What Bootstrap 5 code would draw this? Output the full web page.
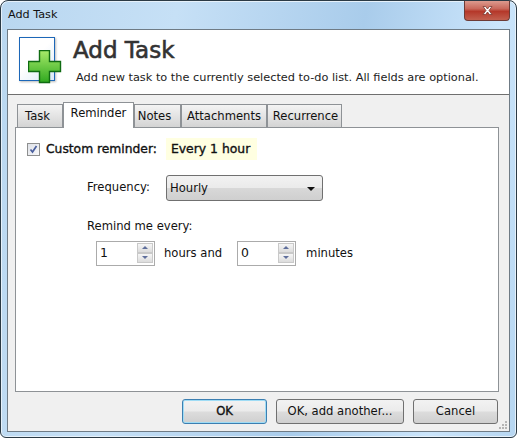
<!DOCTYPE html>
<html lang="en">
<head>
<meta charset="UTF-8">
<title>Add Task</title>
<link href="https://cdn.jsdelivr.net/npm/bootstrap@5.3.2/dist/css/bootstrap.min.css" rel="stylesheet">
<style>
html, body { height: 438px; overflow: hidden; background: #fff; }
body { font-family: "DejaVu Sans", sans-serif; font-size: 11.6px; color: #111; line-height: 1.2; }
.win-frame { width: 517px; height: 438px; border: 1px solid #2b3a45; border-radius: 8px 8px 6px 6px; background: linear-gradient(100deg, #b9d7f0 0%, #c6e0f6 30%, #a9cceb 62%, #cbe5fb 85%, #b6d6f1 100%); padding: 0 6px 6px; box-shadow: inset 0 0 0 1px #e6f1fa; }
.win-title { height: 28px; padding: 7px 0 0 1px; color: #111; position: relative; font-size: 11.2px; }
.win-close { position: absolute; right: 0; top: 0; width: 46px; height: 20px; border: 1px solid #6d3b36; border-top: 0; border-radius: 0 0 4px 4px; background: linear-gradient(#dc9a8e 0%, #c9695c 40%, #b5382a 55%, #c2604f 100%); display: flex; align-items: center; justify-content: center; }
.win-body { width: 503px; height: 403px; background: #f0f0f0; border: 1px solid #6f7b85; position: relative; }
.head-pane { height: 65px; background: #fff; border-bottom: 1px solid #6f6f6f; padding: 6px 0 0 11px; gap: 18px; }
.head-icon { width: 36px; height: 44px; border: 1px solid #1c67b8; background: linear-gradient(135deg, #fff 45%, #d9e8f8 100%); position: relative; flex: none; margin-top: 1px; box-shadow: 1px 1px 2px #bbb; }
.head-icon svg { position: absolute; left: 8px; top: 12px; }
.head-title { font-size: 23px; font-weight: 400; -webkit-text-stroke: .6px #333; color: #333; line-height: 27px; margin-top: 1px; }
.head-sub { font-size: 11.32px; color: #222; margin: 7px 0 0 3px; white-space: nowrap; }
.tab-strip { padding: 8px 0 0 9px; height: 33px; align-items: flex-end; }
.tab-item { height: 24px; border: 1px solid #8e9296; border-bottom: 0; background: linear-gradient(#f4f4f4, #d2d2d2); padding-top: 5px; text-align: center; white-space: nowrap; }
.tab-item.on { height: 26px; background: #fff; padding-top: 4px; position: relative; z-index: 2; }
.tab-w1 { width: 46px; padding-right: 5px; }
.tab-w2 { width: 71px; }
.tab-w3 { width: 47px; padding-right: 6px; }
.tab-w4 { width: 86px; }
.tab-w5 { width: 75px; padding-left: 2px; }
.tab-body { width: 484px; height: 265px; margin-left: 7px; background: #fff; border: 1px solid #8e9296; margin-top: -1px; padding: 10px 0 0 11px; position: relative; }
.chk-box { width: 13px; height: 13px; border: 1px solid #8e8f8f; background: linear-gradient(135deg, #dfe2e8, #f7f7f9); display: flex; align-items: center; justify-content: center; flex: none; }
.chk-lbl { margin-left: 6px; font-size: 12.3px; -webkit-text-stroke: .35px #111; white-space: nowrap; }
.sum-note { background: #ffffe1; width: 91px; height: 22px; line-height: 22px; padding-left: 5px; margin-left: 9px; font-size: 12.4px; -webkit-text-stroke: .35px #111; white-space: nowrap; }
.freq-line { margin: 15px 0 0 60px; }
.freq-pick { width: 157px; height: 26px; margin-left: 16px; border: 1px solid #707070; border-radius: 3px; background: linear-gradient(#f2f2f2 0%, #ebebeb 48%, #d8d8d8 52%, #cfcfcf 100%); padding: 2px 7px 0 3px; }
.caret-mark { width: 0; height: 0; border: 4px solid transparent; border-top-color: #111; border-bottom: 0; }
.every-lbl { margin: 19px 0 0 60px; }
.spin-line { margin: 7px 0 0 69px; }
.spin-box { width: 59px; height: 25px; border: 1px solid #ababab; background: #fff; padding: 0 0 0 3px; font-size: 12.4px; }
.spin-btns { width: 16px; height: 21px; margin: 1px 1px 1px 0; }
.spin-btn { height: 10px; border: 1px solid #c9c9c9; background: linear-gradient(#f6f6f6, #dcdcdc); display: flex; align-items: center; justify-content: center; }
.spin-up { width: 0; height: 0; border: 3px solid transparent; border-bottom: 3px solid #5f6f9c; border-top: 0; }
.spin-down { width: 0; height: 0; border: 3px solid transparent; border-top: 3px solid #5f6f9c; border-bottom: 0; }
.spin-txt { margin: 2px 15px 0 9px; white-space: nowrap; }
.spin-end { margin: 2px 0 0 10px; white-space: nowrap; }
.foot-row { padding: 7px 0 0 174px; gap: 9px; }
.dlg-btn { height: 25px; border: 1px solid #707070; border-radius: 3px; background: linear-gradient(#f2f2f2 0%, #ebebeb 48%, #dcdcdc 52%, #cfcfcf 100%); color: #111; font-size: 11.6px; padding: 1px 0 0; --bs-btn-line-height: 1; }
.dlg-btn.def { border-color: #3c7fb1; box-shadow: inset 0 0 0 1px #9fdcf5; -webkit-text-stroke: .35px #111; }
.w-ok { width: 85px; }
.w-add { width: 128px; }
.w-cancel { width: 85px; }
.grip-mark { position: absolute; right: 1px; bottom: 1px; }
</style>
</head>
<body>
<div class="win-frame">
  <div class="win-title">Add Task
    <div class="win-close">
      <svg width="13" height="11" viewBox="0 0 13 11"><path d="M2 1.500h2.600L6.500 4l1.900-2.500H11L8 5.500l3 4H8.400L6.500 7l-1.900 2.500H2l3-4z" fill="#fff" stroke="#7a3a32" stroke-width=".8"/></svg>
    </div>
  </div>
  <div class="win-body d-flex flex-column">
    <div class="head-pane d-flex">
      <div class="head-icon">
        <svg width="34" height="34" viewBox="0 0 34 34">
          <defs><linearGradient id="plusFill" x1="0" y1="0" x2="0" y2="1"><stop offset="0" stop-color="#a8ea6a"/><stop offset="1" stop-color="#2fa81f"/></linearGradient></defs>
          <path d="M11.500.5h10v11h11v10h-11v11h-10v-11H.500v-10h11z" fill="url(#plusFill)" stroke="#0f6b12" stroke-width="1.400"/>
        </svg>
      </div>
      <div>
        <div class="head-title">Add Task</div>
        <div class="head-sub">Add new task to the currently selected to-do list. All fields are optional.</div>
      </div>
    </div>
    <div class="tab-strip d-flex">
      <div class="tab-item tab-w1">Task</div>
      <div class="tab-item on tab-w2">Reminder</div>
      <div class="tab-item tab-w3">Notes</div>
      <div class="tab-item tab-w4">Attachments</div>
      <div class="tab-item tab-w5">Recurrence</div>
    </div>
    <div class="tab-body">
      <div class="d-flex align-items-center">
        <div class="chk-box">
          <svg width="9" height="9" viewBox="0 0 9 9"><path d="M1.500 4.500l2 2.500 4-6" fill="none" stroke="#4a5f9e" stroke-width="1.700"/></svg>
        </div>
        <span class="chk-lbl">Custom reminder:</span>
        <span class="sum-note">Every 1 hour</span>
      </div>
      <div class="freq-line d-flex align-items-center">
        <span>Frequency:</span>
        <div class="freq-pick d-flex align-items-center justify-content-between">
          <span>Hourly</span><span class="caret-mark"></span>
        </div>
      </div>
      <div class="every-lbl">Remind me every:</div>
      <div class="spin-line d-flex align-items-center">
        <div class="spin-box d-flex justify-content-between align-items-center">
          <span>1</span>
          <div class="spin-btns"><div class="spin-btn"><span class="spin-up"></span></div><div class="spin-btn"><span class="spin-down"></span></div></div>
        </div>
        <span class="spin-txt">hours and</span>
        <div class="spin-box d-flex justify-content-between align-items-center">
          <span>0</span>
          <div class="spin-btns"><div class="spin-btn"><span class="spin-up"></span></div><div class="spin-btn"><span class="spin-down"></span></div></div>
        </div>
        <span class="spin-end">minutes</span>
      </div>
    </div>
    <div class="foot-row d-flex">
      <button type="button" class="btn dlg-btn def w-ok">OK</button>
      <button type="button" class="btn dlg-btn w-add">OK, add another...</button>
      <button type="button" class="btn dlg-btn w-cancel">Cancel</button>
    </div>
    <svg class="grip-mark" width="10" height="10" viewBox="0 0 10 10" fill="#b5b5b5"><rect x="7" y="1" width="2" height="2"/><rect x="4" y="4" width="2" height="2"/><rect x="7" y="4" width="2" height="2"/><rect x="1" y="7" width="2" height="2"/><rect x="4" y="7" width="2" height="2"/><rect x="7" y="7" width="2" height="2"/></svg>
  </div>
</div>
<script src="https://cdn.jsdelivr.net/npm/bootstrap@5.3.2/dist/js/bootstrap.bundle.min.js"></script>
</body>
</html>
